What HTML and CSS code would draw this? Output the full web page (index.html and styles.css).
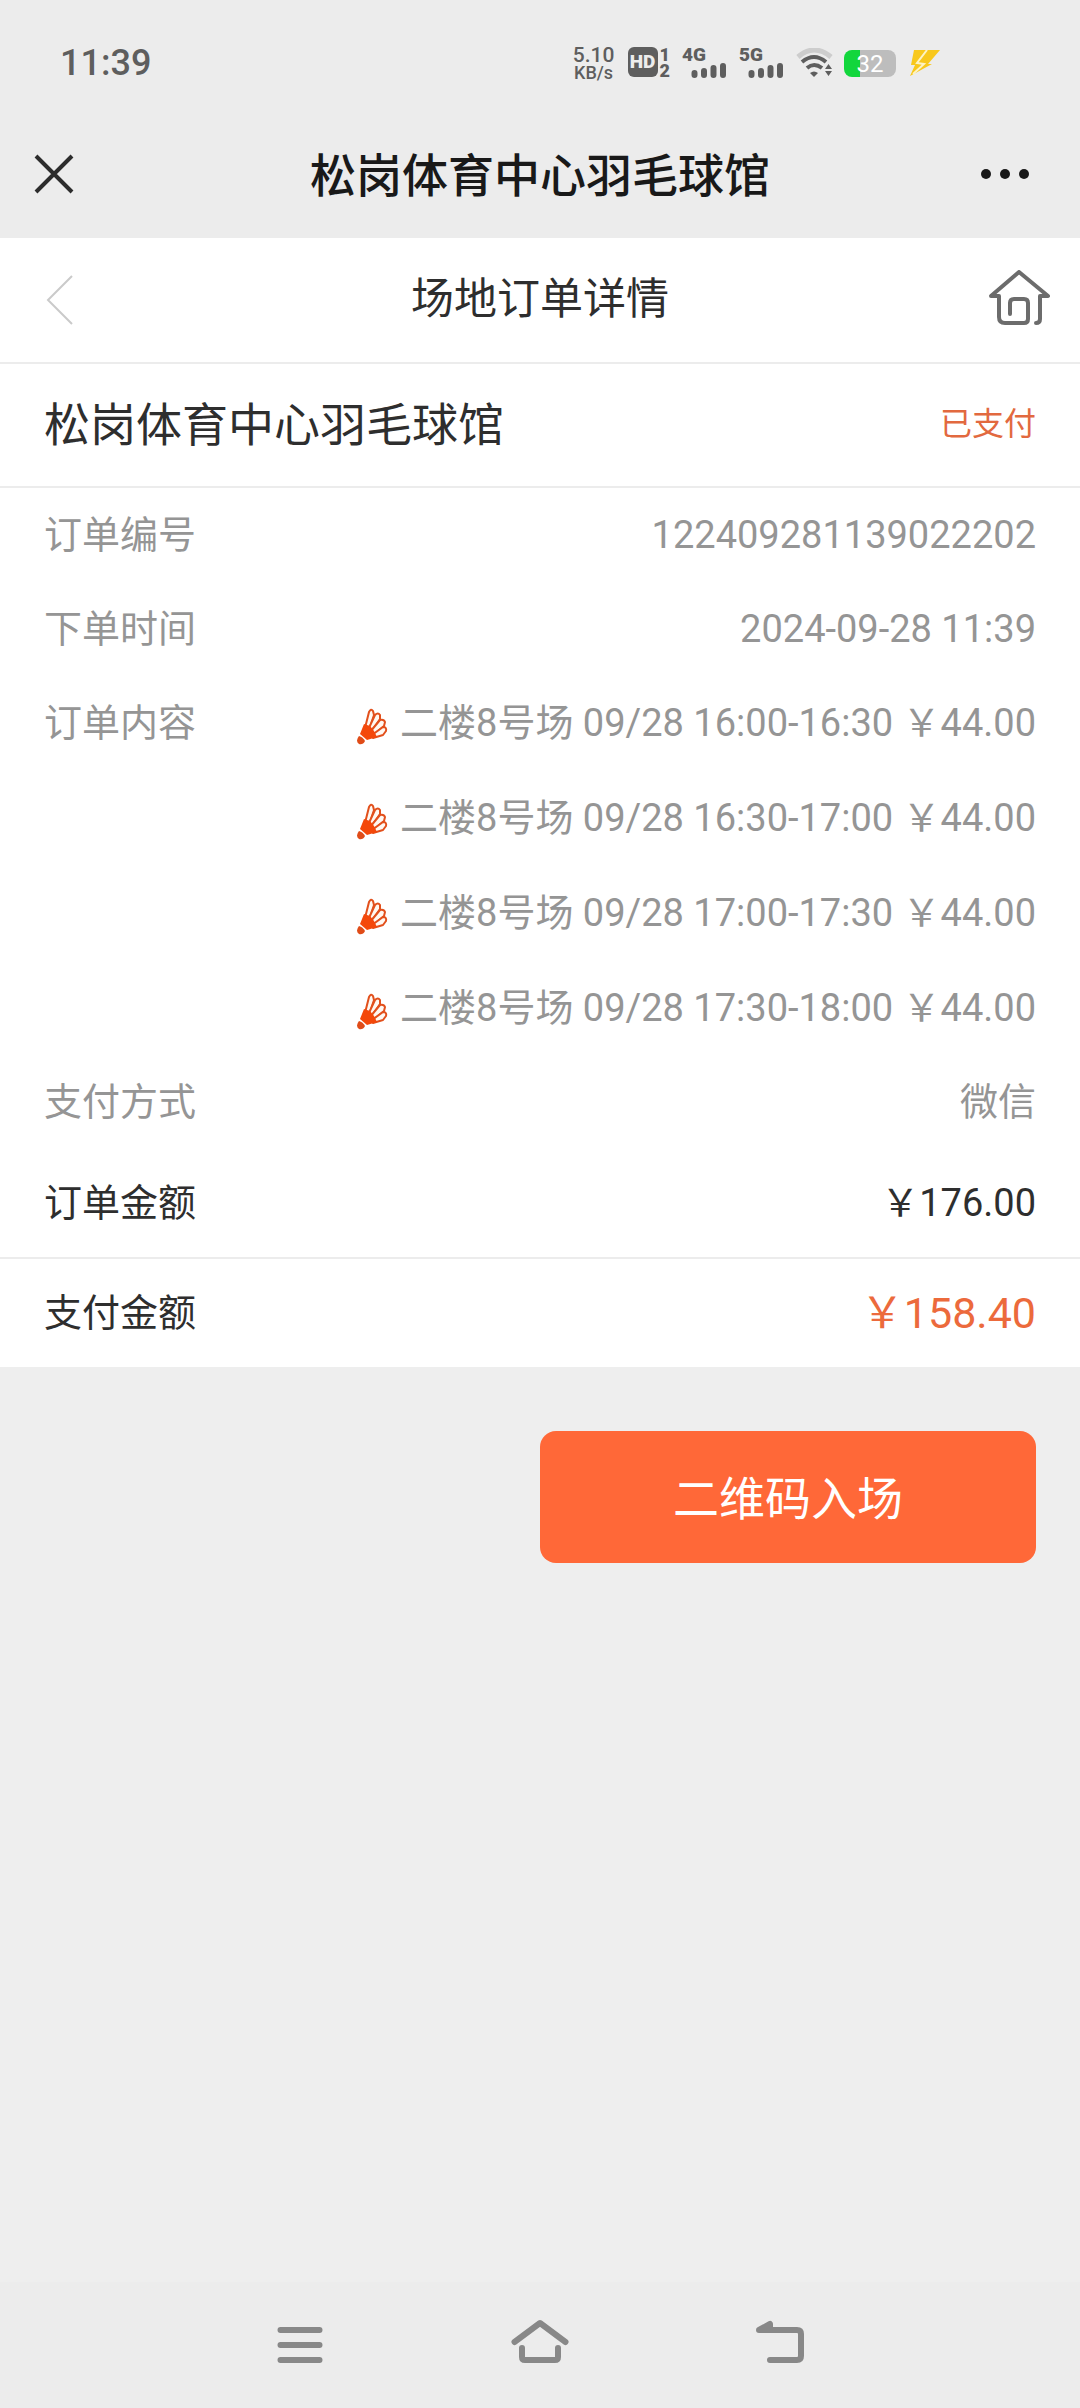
FILE: index.html
```html
<!DOCTYPE html>
<html lang="zh-CN">
<head>
<meta charset="utf-8">
<meta name="viewport" content="width=device-width, initial-scale=1">
<title>松岗体育中心羽毛球馆</title>
<link rel="stylesheet" href="styles.css">
</head>
<body>
<svg class="defs" aria-hidden="true">
  <symbol id="shuttle" viewBox="0 0 32 38">
    <g fill="#fff8f2" stroke="#e2501c" stroke-width="2" stroke-linejoin="round">
      <path d="M9 21 L13 5 Q15 1 17 4 L18 8 L13 23Z"/>
      <path d="M12 23 L19 8 Q22 5 24 8 L24 12 L15 25Z"/>
      <path d="M14 25 L24 13 Q28 12 29 15 L28 19 L17 28Z"/>
      <path d="M16 28 L27 20 Q31 20 30 24 L27 28 L17 31Z"/>
    </g>
    <path fill="#f4480a" d="M8 17 L14 19 L18 24 L21 30 L11 33 L4 27Z"/>
    <path fill="#e04c18" d="M3 29 Q7 30 9 34 Q7 38 3 37 Q-1 34 3 29Z"/>
  </symbol>
  <symbol id="bars" viewBox="0 0 36 16">
    <path d="M3.500 10V12M13 8V12M22.500 5V12M32 3V12" stroke="#5e5e5e" stroke-width="6" stroke-linecap="round"/>
  </symbol>
</svg>

<header class="status">
  <time class="clock">11:39</time>
  <div class="indicators">
    <div class="speed"><span class="rate">5.10</span><span class="unit">KB/s</span></div>
    <div class="hd"><span class="hd-box">HD</span><span class="sims"><span>1</span><span>2</span></span></div>
    <div class="signal"><span>4G</span><svg class="bars"><use href="#bars"/></svg></div>
    <div class="signal"><span>5G</span><svg class="bars"><use href="#bars"/></svg></div>
    <svg class="wifi" viewBox="0 0 38 30" fill="none">
      <path d="M2 9 Q18 -5 35 9" stroke="#cdcdcd" stroke-width="5"/>
      <path d="M6 14 Q18 4 30 14" stroke="#5e5e5e" stroke-width="4"/>
      <path d="M11 20 Q18 14 26 20" stroke="#5e5e5e" stroke-width="4"/>
      <path d="M14 25 Q18 22 22 25 L18 29Z" fill="#5e5e5e"/>
      <path d="M29 21 L32.500 16 L36 21ZM29 23 L32.500 28 L36 23Z" fill="#5e5e5e"/>
    </svg>
    <div class="battery"><span>32</span></div>
    <svg class="bolt" viewBox="0 0 30 26">
      <path fill="#f8c81c" d="M4 0 H30 L18 14 H22 L0 26 L5 15 H1Z"/>
      <path d="M17 0 L7 13 L14 14 L3 24" stroke="#fdf3c4" stroke-width="2" fill="none"/>
    </svg>
  </div>
</header>

<nav class="appbar">
  <button class="icon-btn" aria-label="关闭">
    <svg width="40" height="40" viewBox="0 0 40 40"><path d="M2 2 L38 38 M38 2 L2 38" stroke="#2c2c2c" stroke-width="4"/></svg>
  </button>
  <h1>松岗体育中心羽毛球馆</h1>
  <button class="icon-btn more" aria-label="更多">
    <svg width="50" height="12" viewBox="0 0 50 12" fill="#191919"><circle cx="6" cy="6" r="5"/><circle cx="25" cy="6" r="5"/><circle cx="44" cy="6" r="5"/></svg>
  </button>
</nav>

<main>
  <div class="pagebar">
    <a class="back" href="#" aria-label="返回">
      <svg width="28" height="50" viewBox="0 0 28 50" fill="none"><path d="M26 1 L2 25 L26 49" stroke="#cacaca" stroke-width="2"/></svg>
    </a>
    <h2>场地订单详情</h2>
    <a class="home" href="#" aria-label="首页">
      <svg width="64" height="60" viewBox="0 4 64 60" fill="none" stroke="#6c6c6c" stroke-width="4" stroke-linecap="round" stroke-linejoin="round"><path d="M22 48 V37 Q22 33 26 33 H36 Q40 33 40 37 V53 Q40 57 36 57 H17 Q11 57 11 51 V30 H3 L31 6 L60 30 H52 V53 Q52 57 48 57"/></svg>
    </a>
  </div>

  <section class="venue">
    <h3>松岗体育中心羽毛球馆</h3>
    <span class="paid">已支付</span>
  </section>

  <dl class="details">
    <div class="row"><dt>订单编号</dt><dd>122409281139022202</dd></div>
    <div class="row"><dt>下单时间</dt><dd>2024-09-28 11:39</dd></div>
    <div class="row"><dt>订单内容</dt>
      <dd class="slots">
        <span class="slot"><svg class="shuttle"><use href="#shuttle"/></svg>二楼8号场 09/28 16:00-16:30 ￥44.00</span>
        <span class="slot"><svg class="shuttle"><use href="#shuttle"/></svg>二楼8号场 09/28 16:30-17:00 ￥44.00</span>
        <span class="slot"><svg class="shuttle"><use href="#shuttle"/></svg>二楼8号场 09/28 17:00-17:30 ￥44.00</span>
        <span class="slot"><svg class="shuttle"><use href="#shuttle"/></svg>二楼8号场 09/28 17:30-18:00 ￥44.00</span>
      </dd>
    </div>
    <div class="row"><dt>支付方式</dt><dd>微信</dd></div>
    <div class="row total"><dt>订单金额</dt><dd>￥176.00</dd></div>
    <div class="row total due"><dt>支付金额</dt><dd>￥158.40</dd></div>
  </dl>

  <div class="actions"><button class="enter">二维码入场</button></div>
</main>

<nav class="sysnav">
  <button aria-label="任务"><svg width="60" height="60" viewBox="0 0 60 60"><path d="M10.500 15H49.500M10.500 30H49.500M10.500 45H49.500"/></svg></button>
  <button aria-label="主屏幕"><svg width="60" height="60" viewBox="0 0 60 60"><path d="M4.500 27 L30 8 L55.500 27M12 33V42Q12 45 15 45H45Q48 45 48 42V33"/></svg></button>
  <button aria-label="后退"><svg width="60" height="60" viewBox="0 0 60 60"><path d="M20 45H47Q51 45 51 41V19Q51 15 47 15H9L20 9V14"/></svg></button>
</nav>
</body>
</html>
```

FILE: styles.css
```css
* { box-sizing: border-box; }

body {
  margin: 0;
  min-height: 100vh;
  display: flex;
  flex-direction: column;
  background: #eee;
  color: #2e2e2e;
  font-family: Roboto, "Noto Sans CJK SC", sans-serif;
  font-size: 38px;
}

h1, h2, h3, dl, dd { margin: 0; font-weight: 400; }
button { border: 0; padding: 0; background: none; font: inherit; color: inherit; }
svg { display: block; }
.defs { position: absolute; width: 0; height: 0; }

/* phone status bar */
.status {
  display: flex;
  align-items: center;
  justify-content: space-between;
  height: 110px;
  padding: 16px 140px 0 60px;
  background: #ececec;
  color: #5e5e5e;
}
.clock { font-size: 36px; font-weight: 500; }
.indicators { display: flex; align-items: center; height: 32px; }
.speed {
  display: flex;
  flex-direction: column;
  align-items: center;
  width: 44px;
  margin-right: 12px;
  font-weight: 500;
}
.rate { font-size: 21px; line-height: 20px; }
.unit { font-size: 18px; line-height: 16px; }
.hd { display: flex; gap: 2px; margin-right: 12px; }
.hd-box {
  width: 30px;
  height: 30px;
  border-radius: 6px;
  background: #5e5e5e;
  color: #ececec;
  font-size: 19px;
  font-weight: 900;
  line-height: 30px;
  text-align: center;
}
.sims {
  display: flex;
  flex-direction: column;
  font-size: 18px;
  font-weight: 900;
  line-height: 16px;
}
.signal {
  display: grid;
  width: 45px;
  height: 32px;
  margin-right: 12px;
  font-size: 19px;
  font-weight: 900;
  line-height: 16px;
}
.bars { width: 36px; height: 16px; justify-self: end; }
.wifi { width: 38px; height: 30px; margin-right: 10px; }
.battery {
  width: 52px;
  height: 27px;
  margin-right: 14px;
  border-radius: 8px;
  background: linear-gradient(90deg, #12d63c 16px, #bdbdbd 16px);
  color: #fff;
  font-size: 24px;
  line-height: 28px;
  text-align: center;
}
.bolt { width: 30px; height: 26px; }

/* web view title bar */
.appbar {
  display: flex;
  align-items: center;
  justify-content: space-between;
  height: 128px;
  padding: 0 50px 0 34px;
  background: #ececec;
  color: #191919;
}
.appbar h1 { padding-bottom: 4px; font-size: 46px; font-weight: 500; }
.icon-btn { display: flex; width: 66px; }
.more { width: 50px; }

/* page header */
.pagebar {
  display: flex;
  align-items: center;
  justify-content: space-between;
  height: 126px;
  padding: 0 28px 0 46px;
  background: #fff;
  border-bottom: 2px solid #ececec;
}
.pagebar h2 { font-size: 43px; line-height: 60px; padding-bottom: 2px; }
.back { width: 46px; }

.venue {
  display: flex;
  align-items: center;
  justify-content: space-between;
  height: 124px;
  padding: 0 44px 8px;
  background: #fff;
  border-bottom: 2px solid #ececec;
}
.venue h3 { font-size: 46px; }
.paid { font-size: 32px; color: #e2693f; }

.details { background: #fff; line-height: 94px; }
.row {
  display: flex;
  justify-content: space-between;
  padding: 0 44px;
  color: #959595;
}
.slots { display: flex; flex-direction: column; gap: 1px; }
.slot { display: flex; align-items: center; gap: 12px; }
.shuttle { width: 32px; height: 38px; margin-top: 6px; }
.total { color: #2e2e2e; line-height: 108px; }
.due { border-top: 2px solid #ececec; }
.due dd { font-size: 43px; color: #ec6a3c; }

.actions { display: flex; justify-content: flex-end; padding: 64px 44px; }
.enter {
  width: 50%;
  height: 132px;
  padding-bottom: 4px;
  border-radius: 16px;
  background: #ff6838;
  color: #fff;
  font-size: 46px;
}

/* phone navigation bar */
.sysnav {
  display: flex;
  justify-content: center;
  gap: 180px;
  margin-top: auto;
  padding: 33px 0;
  background: #ececec;
}
.sysnav path {
  fill: none;
  stroke: #888;
  stroke-width: 6;
  stroke-linecap: round;
  stroke-linejoin: round;
}
```
